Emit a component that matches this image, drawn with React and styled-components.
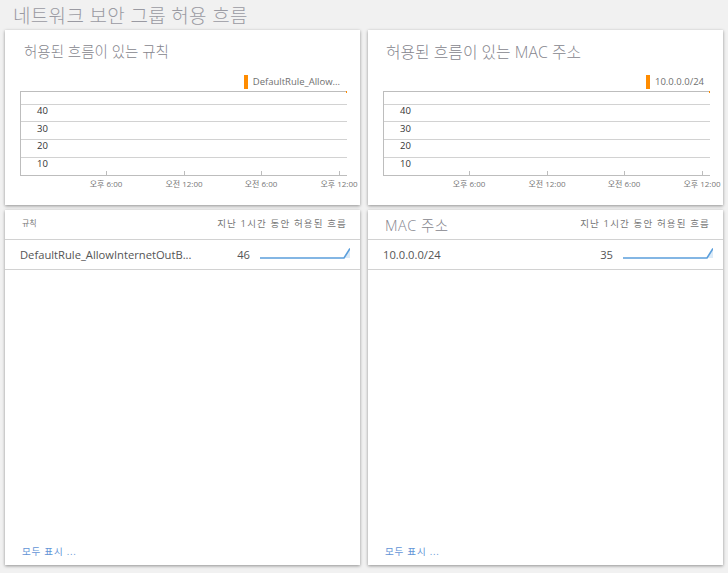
import React from 'react';
import styled, { createGlobalStyle } from 'styled-components';

const FONT = `"Open Sans", "Noto Sans CJK KR", sans-serif`;

const Global = createGlobalStyle`
  html, body { margin: 0; padding: 0; background: #f1f1f1; }
  body { font-family: ${FONT}; overflow: hidden; }
`;

const Page = styled.div`
  width: 728px;
  height: 573px;
  padding: 0 5px;
  box-sizing: border-box;
  overflow: hidden;
`;

const PageTitle = styled.h1`
  margin: 0;
  height: 30px;
  padding-left: 8px;
  font-size: 19px;
  line-height: 32px;
  font-weight: 300;
  color: #9a9aa2;
  letter-spacing: 0.33px;
  white-space: nowrap;
`;

const Grid = styled.div`
  display: grid;
  grid-template-columns: 355px 355px;
  grid-template-rows: 175px 355px;
  column-gap: 8px;
  row-gap: 5px;
`;

const Card = styled.section`
  background: #fff;
  box-shadow: 0 1px 3px rgba(0, 0, 0, 0.4);
  display: flex;
  flex-direction: column;
  min-width: 0;
`;

const CardTitle = styled.h2`
  margin: 0;
  padding: 12px 0 0 ${p => p.$inset}px;
  height: 44px;
  box-sizing: border-box;
  font-size: ${p => p.$size}px;
  line-height: 20px;
  font-weight: 300;
  color: #85858d;
  letter-spacing: 0.02px;
  white-space: nowrap;
`;

const Legend = styled.div`
  display: flex;
  justify-content: flex-end;
  align-items: center;
  height: 15px;
  padding-right: ${p => p.$right}px;
  font-size: 9.5px;
  color: #707070;
`;

const Swatch = styled.i`
  width: 4px;
  height: 14px;
  background: #ff8c00;
  margin-right: 5px;
`;

const ChartSvg = styled.svg`
  display: block;
  margin-left: 10px;
  text {
    font-family: ${FONT};
  }
`;

const HeaderRow = styled.div`
  display: flex;
  justify-content: space-between;
  align-items: center;
  height: 29px;
  padding: 0 13px 0 ${p => p.$inset}px;
  border-bottom: 1px solid #d2d2d2;
`;

const RuleHead = styled.span`
  font-size: 8px;
  color: #777;
  margin-top: -4px;
  padding-left: 7px;
`;

const MacHead = styled.span`
  font-size: 14.5px;
  color: #85858d;
  font-weight: 300;
  letter-spacing: 0.5px;
  padding-left: 7px;
`;

const FlowHead = styled.span`
  font-size: 9.5px;
  color: #777;
  letter-spacing: 1.15px;
  margin-top: -3px;
  white-space: nowrap;
`;

const Row = styled.div`
  display: flex;
  align-items: center;
  height: 29px;
  padding: 0 10px 0 15px;
  border-bottom: 1px solid #d2d2d2;
  font-size: 11.2px;
  color: #555;
`;

const RowName = styled.span`
  flex: 1;
  min-width: 0;
`;

const RowCount = styled.span`
  width: 30px;
  margin-right: 10px;
  text-align: right;
`;

const Body = styled.div`
  flex: 1;
`;

const ShowAll = styled.a`
  display: block;
  padding: 0 0 6px 17px;
  font-size: 9.5px;
  line-height: 14px;
  letter-spacing: 0.8px;
  color: #6294d6;
`;

const Chart = ({ labels }) => {
  const ticks = [91, 169, 246, 324];
  return (
    <ChartSvg width="345" height="106" viewBox="0 0 345 106">
      {[0, 13, 30, 48, 66].map((y, i) => (
        <line key={y} x1="5" x2="332" y1={y + 2.5} y2={y + 2.5} stroke={i === 0 ? '#bdbdbd' : '#d2d2d2'} />
      ))}
      <line x1="5" x2="332" y1="86.5" y2="86.5" stroke="#bdbdbd" />
      <line x1="5.5" x2="5.5" y1="2" y2="87" stroke="#bdbdbd" />
      {ticks.map(x => (
        <line key={x} x1={x + 0.5} x2={x + 0.5} y1="82" y2="87" stroke="#bdbdbd" />
      ))}
      <rect x="331" y="2" width="1" height="2" fill="#ff8c00" />
      {[['40', 25], ['30', 43], ['20', 60], ['10', 78]].map(([t, y]) => (
        <text key={t} x="22" y={y} fontSize="9.5" fill="#333">{t}</text>
      ))}
      {labels.map((t, i) => (
        <text key={t + i} x={ticks[i]} y="97.5" fontSize="8" fill="#777" textAnchor="middle">{t}</text>
      ))}
    </ChartSvg>
  );
};

const Spark = () => (
  <svg width="90" height="14" viewBox="0 0 90 14">
    <path d="M0 10 H84 L90 0.5 V10 Z" fill="#dcebf8" />
    <path d="M0 10 H84 L90 0.5" fill="none" stroke="#5b9fdc" strokeWidth="1.6" />
  </svg>
);

const timeLabels = ['오후 6:00', '오전 12:00', '오전 6:00', '오후 12:00'];

export default function App() {
  return (
    <>
      <Global />
      <Page>
        <PageTitle>네트워크 보안 그룹 허용 흐름</PageTitle>
        <Grid>
          <Card>
            <CardTitle $inset={19} $size={14.5}>허용된 흐름이 있는 규칙</CardTitle>
            <Legend $right={20}><Swatch />DefaultRule_Allow...</Legend>
            <Chart labels={timeLabels} />
          </Card>
          <Card>
            <CardTitle $inset={18} $size={15.8}>허용된 흐름이 있는 MAC 주소</CardTitle>
            <Legend $right={19}><Swatch />10.0.0.0/24</Legend>
            <Chart labels={timeLabels} />
          </Card>
          <Card>
            <HeaderRow $inset={10}>
              <RuleHead>규칙</RuleHead>
              <FlowHead>지난 1시간 동안 허용된 흐름</FlowHead>
            </HeaderRow>
            <Row>
              <RowName>DefaultRule_AllowInternetOutB...</RowName>
              <RowCount>46</RowCount>
              <Spark />
            </Row>
            <Body />
            <ShowAll>모두 표시 ...</ShowAll>
          </Card>
          <Card>
            <HeaderRow $inset={10}>
              <MacHead>MAC 주소</MacHead>
              <FlowHead>지난 1시간 동안 허용된 흐름</FlowHead>
            </HeaderRow>
            <Row>
              <RowName>10.0.0.0/24</RowName>
              <RowCount>35</RowCount>
              <Spark />
            </Row>
            <Body />
            <ShowAll>모두 표시 ...</ShowAll>
          </Card>
        </Grid>
      </Page>
    </>
  );
}
